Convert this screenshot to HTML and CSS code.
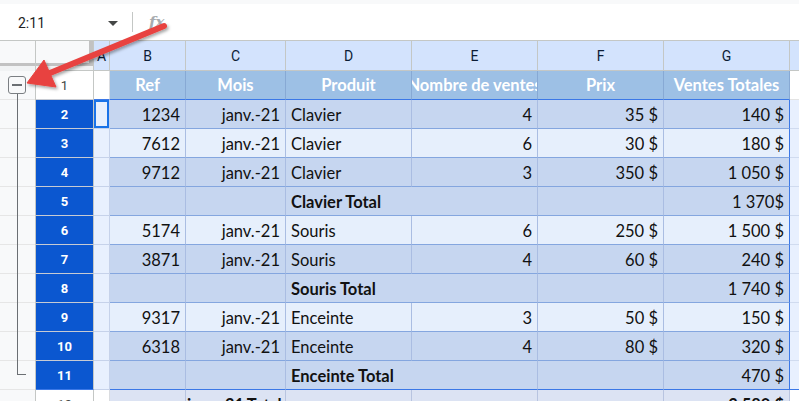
FILE: index.html
```html
<!DOCTYPE html>
<html lang="fr">
<head>
<meta charset="utf-8">
<title>Feuille</title>
<link rel="stylesheet" href="styles.css">
</head>
<body>
<div class="formula">
  <div class="namebox"><span class="nb-text">2:11</span><span class="nb-caret"></span></div>
  <div class="fdiv"></div>
  <div class="fx">fx</div>
</div>
<div class="sheet">
  <div class="gutter">
    <div class="g-head"></div>
    <div class="g-body">
      <div class="minus"><span></span></div>
      <div class="bracket"></div>
    </div>
  </div>
  <div class="grid">
    <!-- column headers -->
    <div class="c corner"></div>
    <div class="c ch">A</div>
    <div class="c ch">B</div>
    <div class="c ch">C</div>
    <div class="c ch">D</div>
    <div class="c ch">E</div>
    <div class="c ch">F</div>
    <div class="c ch">G</div>
    <div class="c ch chh"></div>
    <!-- row 1 -->
    <div class="c rh plain">1</div>
    <div class="c ca top"></div>
    <div class="c hd">Ref</div>
    <div class="c hd">Mois</div>
    <div class="c hd">Produit</div>
    <div class="c hd">Nombre de ventes</div>
    <div class="c hd">Prix</div>
    <div class="c hd">Ventes Totales</div>
    <div class="c hh top"></div>
    <!-- row 2 -->
    <div class="c rh">2</div>
    <div class="c ca sel active"></div>
    <div class="c d r">1234</div>
    <div class="c d r">janv.-21</div>
    <div class="c d">Clavier</div>
    <div class="c d r">4</div>
    <div class="c d r">35 $</div>
    <div class="c d r last">140 $</div>
    <div class="c hh sel"></div>
    <!-- row 3 -->
    <div class="c rh">3</div>
    <div class="c ca sel"></div>
    <div class="c l r">7612</div>
    <div class="c l r">janv.-21</div>
    <div class="c l">Clavier</div>
    <div class="c l r">6</div>
    <div class="c l r">30 $</div>
    <div class="c l r last">180 $</div>
    <div class="c hh sel"></div>
    <!-- row 4 -->
    <div class="c rh">4</div>
    <div class="c ca sel"></div>
    <div class="c d r">9712</div>
    <div class="c d r">janv.-21</div>
    <div class="c d">Clavier</div>
    <div class="c d r">3</div>
    <div class="c d r">350 $</div>
    <div class="c d r last">1 050 $</div>
    <div class="c hh sel"></div>
    <!-- row 5 -->
    <div class="c rh">5</div>
    <div class="c ca sel"></div>
    <div class="c d"></div>
    <div class="c d"></div>
    <div class="c d b span2">Clavier Total</div>
    <div class="c d"></div>
    <div class="c d r last">1 370$</div>
    <div class="c hh sel"></div>
    <!-- row 6 -->
    <div class="c rh">6</div>
    <div class="c ca sel"></div>
    <div class="c l r">5174</div>
    <div class="c l r">janv.-21</div>
    <div class="c l">Souris</div>
    <div class="c l r">6</div>
    <div class="c l r">250 $</div>
    <div class="c l r last">1 500 $</div>
    <div class="c hh sel"></div>
    <!-- row 7 -->
    <div class="c rh">7</div>
    <div class="c ca sel"></div>
    <div class="c d r">3871</div>
    <div class="c d r">janv.-21</div>
    <div class="c d">Souris</div>
    <div class="c d r">4</div>
    <div class="c d r">60 $</div>
    <div class="c d r last">240 $</div>
    <div class="c hh sel"></div>
    <!-- row 8 -->
    <div class="c rh">8</div>
    <div class="c ca sel"></div>
    <div class="c d"></div>
    <div class="c d"></div>
    <div class="c d b span2">Souris Total</div>
    <div class="c d"></div>
    <div class="c d r last">1 740 $</div>
    <div class="c hh sel"></div>
    <!-- row 9 -->
    <div class="c rh">9</div>
    <div class="c ca sel"></div>
    <div class="c l r">9317</div>
    <div class="c l r">janv.-21</div>
    <div class="c l">Enceinte</div>
    <div class="c l r">3</div>
    <div class="c l r">50 $</div>
    <div class="c l r last">150 $</div>
    <div class="c hh sel"></div>
    <!-- row 10 -->
    <div class="c rh">10</div>
    <div class="c ca sel"></div>
    <div class="c d r">6318</div>
    <div class="c d r">janv.-21</div>
    <div class="c d">Enceinte</div>
    <div class="c d r">4</div>
    <div class="c d r">80 $</div>
    <div class="c d r last">320 $</div>
    <div class="c hh sel"></div>
    <!-- row 11 -->
    <div class="c rh endrow">11</div>
    <div class="c ca sel endrow"></div>
    <div class="c d endrow"></div>
    <div class="c d endrow"></div>
    <div class="c d b span2 endrow">Enceinte Total</div>
    <div class="c d endrow"></div>
    <div class="c d r last endrow">470 $</div>
    <div class="c hh sel endrow"></div>
    <!-- row 12 -->
    <div class="c rh plain">12</div>
    <div class="c ca"></div>
    <div class="c u"></div>
    <div class="c u b tight">janv.-21 Total</div>
    <div class="c u"></div>
    <div class="c u"></div>
    <div class="c u"></div>
    <div class="c u r b">3 580 $</div>
    <div class="c hh"></div>
  </div>
</div>
<svg class="arrow" width="799" height="401" viewBox="0 0 799 401" aria-hidden="true">
  <defs>
    <filter id="sh" x="-20%" y="-20%" width="140%" height="140%">
      <feDropShadow dx="1.5" dy="2" stdDeviation="1.5" flood-color="#000" flood-opacity="0.35"/>
    </filter>
  </defs>
  <g filter="url(#sh)" fill="#e8433f" stroke="#e8433f">
    <line x1="164" y1="26" x2="50" y2="73" stroke-width="6" stroke-linecap="round"/>
    <polygon points="27,83 44,60 56,87" stroke-width="1" stroke-linejoin="round"/>
  </g>
</svg>
</body>
</html>
```

FILE: styles.css
```css
html, body {
  margin: 0;
  padding: 0;
}
body {
  width: 799px;
  height: 401px;
  overflow: hidden;
  position: relative;
  background: #ffffff;
  font-family: Lato, "Liberation Sans", sans-serif;
}

/* formula bar */
.formula {
  box-sizing: border-box;
  height: 41px;
  border-top: 4px solid #f8f9fa;
  border-bottom: 1px solid #c4c7c5;
  display: flex;
  align-items: center;
  background: #fff;
  font-family: Roboto, "Liberation Sans", sans-serif;
}
.namebox {
  width: 132px;
  box-sizing: border-box;
  padding-left: 18px;
  padding-right: 14px;
  display: flex;
  align-items: center;
  justify-content: space-between;
  margin-top: 2px;
}
.nb-text {
  font-size: 14px;
  color: #1f1f1f;
}
.nb-caret {
  width: 0;
  height: 0;
  border-left: 5px solid transparent;
  border-right: 5px solid transparent;
  border-top: 5px solid #444746;
}
.fdiv {
  width: 1px;
  height: 20px;
  background: #c4c7c5;
}
.fx {
  margin-left: 16px;
  font-family: "DejaVu Serif", serif;
  font-style: italic;
  font-weight: 700;
  font-size: 15px;
  color: #a8acb0;
}

/* sheet */
.sheet {
  display: flex;
}
.gutter {
  width: 36px;
  flex: none;
  box-sizing: border-box;
  border-right: 1px solid #c4c7c5;
  background: #f8f9fa;
  display: flex;
  flex-direction: column;
}
.g-head {
  height: 30px;
  background: linear-gradient(to bottom, #f8f9fa 0 22px, #c2c2c2 22px 25px, #f1f3f4 25px 30px);
}
.g-body {
  flex: 1;
  padding-top: 5px;
  background: repeating-linear-gradient(to bottom, transparent 0 28px, #e6e6e6 28px 29px);
}
.minus {
  box-sizing: border-box;
  width: 18px;
  height: 18px;
  margin-left: 8px;
  border: 1px solid #7b7f83;
  border-radius: 3px;
  background: #f8f9fa;
  display: flex;
  align-items: center;
  justify-content: center;
}
.minus span {
  width: 10px;
  height: 2px;
  background: #6b6f73;
}
.bracket {
  box-sizing: border-box;
  width: 9px;
  height: 281px;
  margin-left: 17px;
  border-left: 1px solid #6b6f73;
  border-bottom: 1px solid #6b6f73;
}

.grid {
  flex: 1;
  display: grid;
  grid-template-columns: 58px 16px 76px 100px 126px 126px 126px 126px 1fr;
  grid-template-rows: 30px repeat(12, 29px);
}
.c {
  box-sizing: border-box;
  border-right: 1px solid #c4c7c5;
  border-bottom: 1px solid #c4c7c5;
  display: flex;
  align-items: center;
  overflow: hidden;
  white-space: nowrap;
  padding: 0 5px;
  font-size: 16.5px;
  color: #111;
  min-width: 0;
}

.corner {
  background:
    linear-gradient(to right, transparent 0 53px, #c2c2c2 53px 57px, transparent 57px) top / 100% 22px no-repeat,
    linear-gradient(to bottom, #f8f9fa 0 22px, #c2c2c2 22px 25px, #f1f3f4 25px 30px);
  border-bottom-color: #c4c7c5;
}
.ch {
  background: #d3e3fd;
  justify-content: center;
  font-family: Roboto, "Liberation Sans", sans-serif;
  font-size: 14px;
  color: #0b1c36;
  padding: 0;
}
.chh {
  border-right: none;
}

.rh {
  background: #0b57d0;
  color: #fff;
  font-family: Roboto, "Liberation Sans", sans-serif;
  font-weight: 700;
  font-size: 13px;
  justify-content: center;
  padding: 0;
  border-bottom-color: #c7cbd3;
}
.rh.plain {
  background: #fff;
  color: #444746;
  font-weight: 400;
}

.ca {
  background: #fff;
  border-right-color: #dadce0;
  border-bottom-color: #dadce0;
  padding: 0;
}
.ca.sel {
  background: #e8f0fe;
  border-right-color: #c6d2ea;
  border-bottom-color: #c6d2ea;
}
.top {
  border-bottom-color: #3b78e7;
}
.active {
  box-shadow: inset 0 0 0 2px #1a73e8;
}

.hd {
  background: #9dc0e5;
  color: #fff;
  font-weight: 700;
  justify-content: center;
  border-right-color: #87a9d4;
  border-bottom-color: #3b78e7;
  padding: 0;
}

.d, .l {
  border-right-color: #aabde2;
  border-bottom-color: #84a6df;
  padding-top: 2px;
}
.d {
  background: #c6d6f0;
}
.l {
  background: #e6effc;
}
.u {
  background: #dce3f3;
  border-right-color: #b8c4e0;
  border-bottom-color: #b8c4e0;
  padding-top: 2px;
}
.r {
  justify-content: flex-end;
}
.b {
  font-weight: 700;
}
.tight {
  padding-left: 1px;
  padding-right: 0;
  letter-spacing: -0.3px;
}
.span2 {
  grid-column: span 2;
}
.last {
  border-right-color: #3b78e7;
}
.endrow {
  border-bottom-color: #3b78e7;
}

.hh {
  background: #fff;
  border-right: none;
  border-bottom-color: #e3e3e3;
  padding: 0;
}
.hh.sel {
  background: #e8f0fe;
  border-bottom-color: #d0dbef;
}
.hh.endrow {
  border-bottom-color: #3b78e7;
}

.arrow {
  position: absolute;
  left: 0;
  top: 0;
  pointer-events: none;
}
```
